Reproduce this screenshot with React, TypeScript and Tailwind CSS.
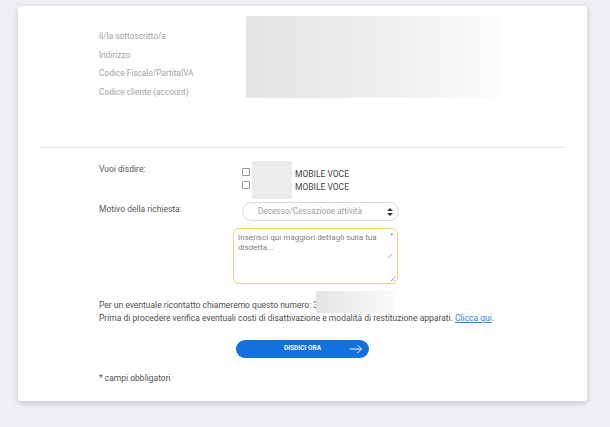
import React from "react"

const labels = ["Il/la sottoscritto/a", "Indirizzo", "Codice Fiscale/PartitaIVA", "Codice cliente (account)"]

function Blur({ className }: { className: string }) {
  return <div className={"bg-gradient-to-r from-[#e4e4e4] via-[#efefef] to-[#fbfbfb] " + className} />
}

export default function App() {
  return (
    <div className="w-[610px] h-[427px] bg-[#efeff4] pt-[6px] font-['Roboto',sans-serif] overflow-hidden">
      <div className="ml-[18px] w-[569px] h-[395px] bg-white rounded-[3px] shadow-[0_2px_6px_rgba(0,0,0,0.18)]">
        {/* anagrafica */}
        <div className="flex pt-[10px] pl-[81px]">
          <div className="w-[147px] pt-[11px] text-[8.3px] leading-[18.5px] text-[#a3a3a3]">
            {labels.map(l => <div key={l}>{l}</div>)}
          </div>
          <div className="w-[254px] h-[82px] bg-gradient-to-r from-[#e3e3e3] via-[#eeeeee] to-[#fcfcfc] rounded-[1px]" />
        </div>

        <div className="mt-[46px] mx-[23px] h-px bg-[#e6e6e6]" />

        <div className="pl-[81px] text-[8.5px] text-[#555]">
          <div className="flex mt-[13px]">
            <div className="w-[143px] pt-[2px] leading-[12px] text-[#5a5a5a]">Vuoi disdire:</div>
            <div className="flex">
              <div className="flex flex-col gap-[5px] pt-[7px]">
                <div className="w-[8px] h-[8px] border border-[#999] rounded-[1px] bg-white" />
                <div className="w-[8px] h-[8px] border border-[#999] rounded-[1px] bg-white" />
              </div>
              <div className="ml-[2px] w-[40px] h-[38px] bg-[#ececec]" />
              <div className="pl-[3px] pt-[7px] leading-[13px] text-[#444]">
                <div>MOBILE VOCE</div>
                <div>MOBILE VOCE</div>
              </div>
            </div>
          </div>

          <div className="flex mt-[3px]">
            <div className="w-[143px] pt-[1px] leading-[12px] text-[#5a5a5a]">Motivo della richiesta:</div>
            <div className="w-[157px] h-[19px] rounded-full border border-[#d8d8d8] flex items-center pl-[15px] pr-[5px] text-[#a0a0a0] text-[8.2px]">
              <span className="flex-1">Decesso/Cessazione attività</span>
              <svg width="6" height="8" viewBox="0 0 6 8"><path d="M3 0L6 3H0zM3 8L0 5h6z" fill="#333" /></svg>
            </div>
          </div>

          <div className="ml-[134px] mt-[7px] w-[165px] h-[56px] relative rounded-[6px] border border-[#f0d36a] pl-[4px] pt-[4px] pr-[14px] text-[8.1px] leading-[9.5px] text-[#808080]">
            Inserisci qui maggiori dettagli sulla tua disdetta...
            <span className="absolute right-[4px] top-[1px] text-[6px] text-[#555]">*</span>
            <svg className="absolute right-[4px] top-[24px]" width="6" height="6" viewBox="0 0 6 6"><path d="M1 5L5 1" stroke="#c8c8c8" strokeWidth="1.2" /></svg>
            <svg className="absolute right-[1px] bottom-[1px]" width="6" height="6" viewBox="0 0 6 6"><path d="M1 5L5 1M3.5 5L5 3.5" stroke="#777" strokeWidth="0.7" /></svg>
          </div>

          <div className="mt-[15px] leading-[13px] text-[#505050]">
            <div className="relative">
              Per un eventuale ricontatto chiameremo questo numero: 3
              <Blur className="absolute left-[217px] top-[-8px] w-[79px] h-[22px]" />
            </div>
            <div>
              Prima di procedere verifica eventuali costi di disattivazione e modalità di restituzione apparati.{" "}
              <a href="#" className="text-[#3b7fd6] underline">Clicca qui</a>.
            </div>
          </div>
        </div>

        <div className="flex justify-center mt-[15px]">
          <button className="relative w-[133px] h-[18px] rounded-full bg-[#1270df] text-white text-[6.5px] font-bold flex items-center justify-center">
            DISDICI ORA
            <svg className="absolute right-[6px] top-[4px]" width="14" height="10" viewBox="0 0 14 10">
              <path d="M0.5 5H12.5M8.5 1L12.5 5L8.5 9" stroke="#fff" strokeWidth="1" fill="none" />
            </svg>
          </button>
        </div>

        <div className="pl-[81px] mt-[14px] text-[8.5px] leading-[12px] text-[#505050]">* campi obbligatori</div>
      </div>
    </div>
  )
}
